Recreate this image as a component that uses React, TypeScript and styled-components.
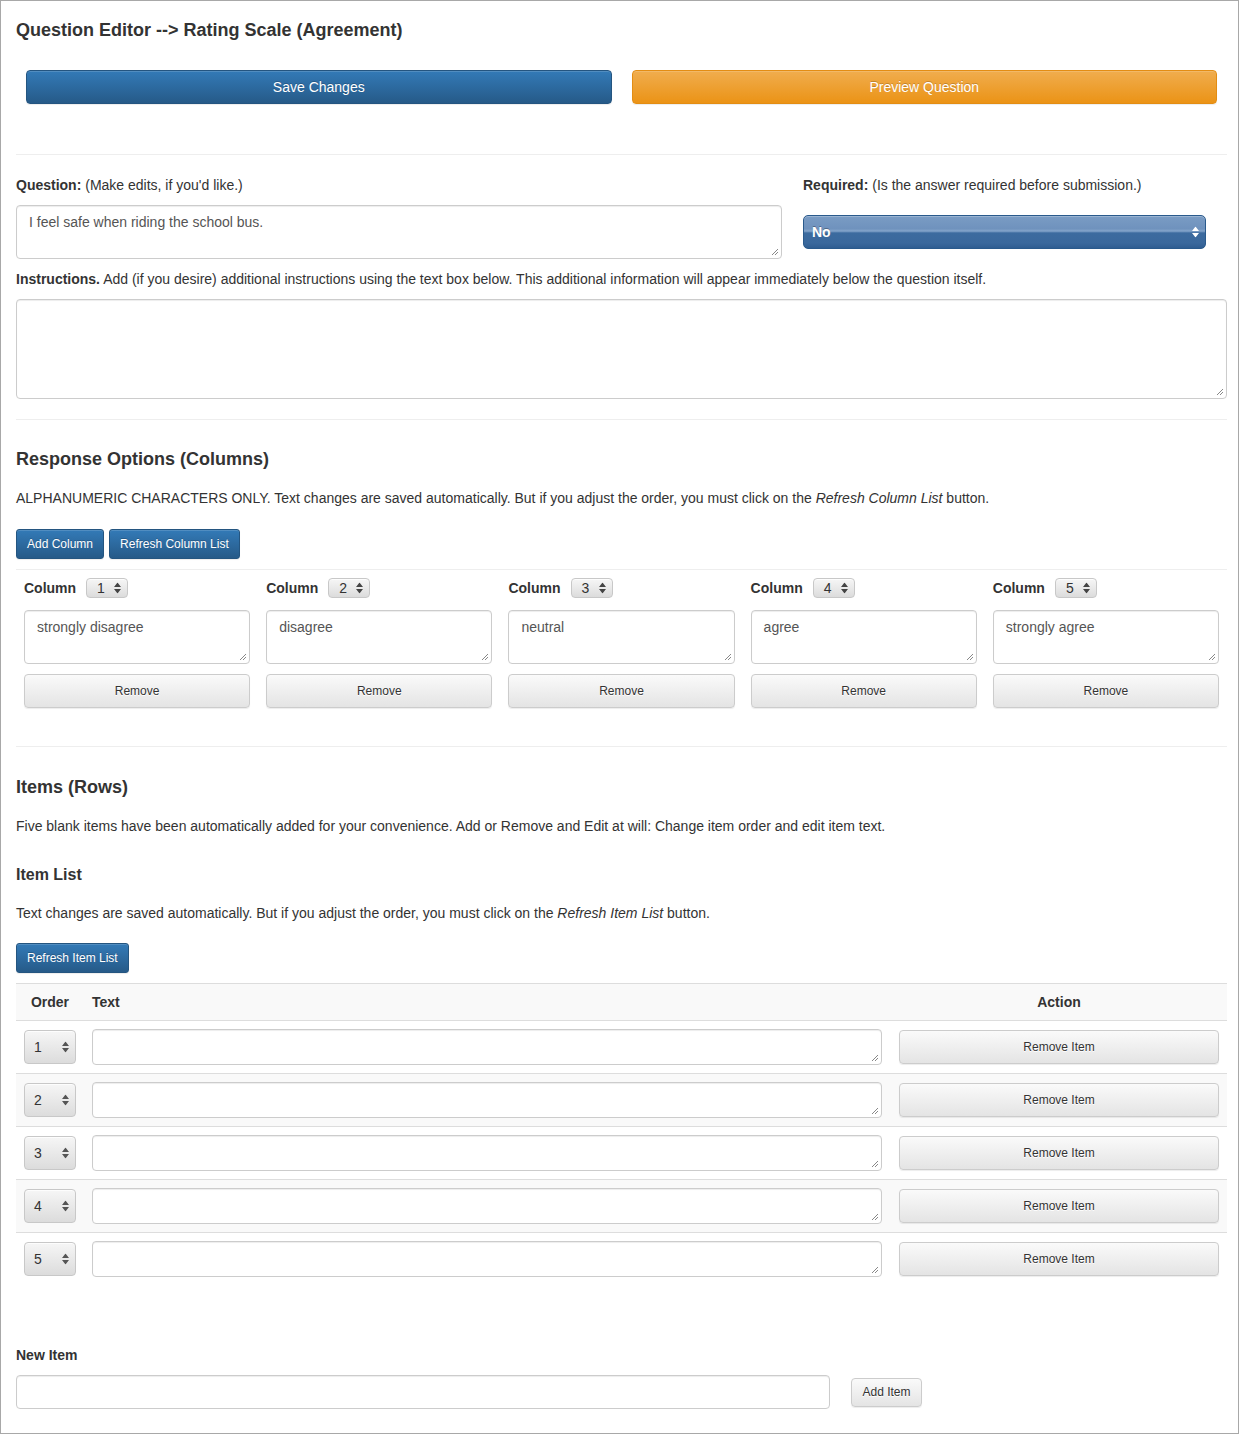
import React from "react";
import styled, { createGlobalStyle } from "styled-components";

const Global = createGlobalStyle`
  html, body { margin: 0; padding: 0; background: #fff; }
  body { font-family: "Liberation Sans", Arial, sans-serif; font-size: 14px; color: #333; line-height: 20px; }
  * { box-sizing: border-box; }
`;

const Page = styled.div`
  border: 1px solid #a8a8a8;
  padding: 19px 11px 24px 15px;
  min-height: 100vh;
`;

const Title = styled.h2<{ $size?: number; $mt?: number }>`
  margin: ${(p) => p.$mt ?? 0}px 0 0;
  font-size: ${(p) => p.$size ?? 18}px;
  line-height: 20px;
  font-weight: bold;
  color: #333;
`;

const Text = styled.p<{ $mt?: number }>`
  margin: ${(p) => p.$mt ?? 0}px 0 0;
  font-size: 14px;
  line-height: 20px;
`;

const Rule = styled.hr<{ $mt: number }>`
  border: 0;
  border-top: 1px solid #eee;
  margin: ${(p) => p.$mt}px 0 0;
  height: 0;
`;

const TopButtons = styled.div`
  display: grid;
  grid-template-columns: 1fr 1fr;
  margin-top: 30px;
`;

const TopCell = styled.div`
  padding: 0 10px;
`;

const BigButton = styled.button<{ $variant: "blue" | "orange" }>`
  width: 100%;
  height: 34px;
  border-radius: 4px;
  font-family: inherit;
  font-size: 14px;
  color: #fff;
  text-shadow: 0 -1px 0 rgba(0, 0, 0, 0.2);
  box-shadow: inset 0 1px 0 rgba(255, 255, 255, 0.15), 0 1px 1px rgba(0, 0, 0, 0.075);
  border: 1px solid ${(p) => (p.$variant === "blue" ? "#245580" : "#e38d13")};
  background: ${(p) =>
    p.$variant === "blue"
      ? "linear-gradient(to bottom, #337ab7 0%, #265a88 100%)"
      : "linear-gradient(to bottom, #f0ad4e 0%, #eb9316 100%)"};
`;

const QuestionRow = styled.div`
  display: grid;
  grid-template-columns: 766px 403px;
  column-gap: 21px;
  margin-top: 20px;
`;

const Label = styled.div<{ $mt?: number }>`
  margin-top: ${(p) => p.$mt ?? 0}px;
  font-size: 14px;
  line-height: 20px;
  b { font-weight: bold; }
`;

const Area = styled.div<{ $h: number; $mt?: number; $w?: string }>`
  position: relative;
  width: ${(p) => p.$w ?? "100%"};
  height: ${(p) => p.$h}px;
  margin-top: ${(p) => p.$mt ?? 0}px;
  border: 1px solid #ccc;
  border-radius: 4px;
  background: #fff;
  box-shadow: inset 0 1px 1px rgba(0, 0, 0, 0.075);
  padding: 6px 12px;
  color: #555;
  font-size: 14px;
  line-height: 20px;
`;

const Grip = styled.svg`
  position: absolute;
  right: 2px;
  bottom: 2px;
`;

const Resize = () => (
  <Grip width="8" height="8" viewBox="0 0 8 8">
    <path d="M7 1 L1 7 M7 4 L4 7" stroke="#888" strokeWidth="1" />
  </Grip>
);

const BlueSelect = styled.div`
  position: relative;
  margin-top: 20px;
  height: 34px;
  border: 1px solid #2a5a8c;
  border-radius: 5px;
  background: linear-gradient(
    to bottom,
    #7a9cc4 0%,
    #6f92bd 40%,
    #84a5cb 47%,
    #3c6b9f 53%,
    #3a689c 85%,
    #2f5d91 100%
  );
  box-shadow: inset 0 1px 0 rgba(255, 255, 255, 0.25);
  color: #fff;
  font-size: 14px;
  font-weight: bold;
  line-height: 32px;
  padding-left: 8px;
  text-shadow: 0 -1px 0 rgba(0, 0, 0, 0.3);
`;

const ArrowsSvg = styled.svg<{ $right: number }>`
  position: absolute;
  right: ${(p) => p.$right}px;
  top: 50%;
  transform: translateY(-50%);
`;

const Arrows = ({ color, right }: { color: string; right: number }) => (
  <ArrowsSvg $right={right} width="7" height="11" viewBox="0 0 7 11">
    <path d="M3.5 0 L7 4.5 L0 4.5 Z M0 6.5 L7 6.5 L3.5 11 Z" fill={color} />
  </ArrowsSvg>
);

const SmallButtons = styled.div<{ $mt: number }>`
  display: flex;
  gap: 5px;
  margin-top: ${(p) => p.$mt}px;
`;

const SmallBlue = styled.button`
  height: 30px;
  padding: 0 10px;
  border-radius: 3px;
  border: 1px solid #245580;
  background: linear-gradient(to bottom, #337ab7 0%, #265a88 100%);
  color: #fff;
  font-family: inherit;
  font-size: 12px;
  text-shadow: 0 -1px 0 rgba(0, 0, 0, 0.2);
  box-shadow: inset 0 1px 0 rgba(255, 255, 255, 0.15), 0 1px 1px rgba(0, 0, 0, 0.075);
`;

const ColumnsGrid = styled.div`
  display: grid;
  grid-template-columns: repeat(5, 1fr);
  margin-top: 8px;
`;

const ColumnCell = styled.div`
  padding: 0 8px;
`;

const ColumnHead = styled.div`
  display: flex;
  align-items: center;
  gap: 10px;
  height: 20px;
  font-weight: bold;
`;

const GraySelect = styled.div<{ $w: number; $h: number; $pl: number }>`
  position: relative;
  width: ${(p) => p.$w}px;
  height: ${(p) => p.$h}px;
  border: 1px solid #c8c8c8;
  border-radius: 4px;
  background: linear-gradient(to bottom, #f6f6f6 0%, #e9e9e9 50%, #dcdcdc 100%);
  box-shadow: inset 0 1px 0 rgba(255, 255, 255, 0.8);
  color: #333;
  font-weight: normal;
  font-size: 14px;
  line-height: ${(p) => p.$h - 2}px;
  padding-left: ${(p) => p.$pl}px;
`;

const GrayButton = styled.button<{ $h?: number; $mt?: number; $w?: string }>`
  width: ${(p) => p.$w ?? "100%"};
  height: ${(p) => p.$h ?? 34}px;
  margin-top: ${(p) => p.$mt ?? 0}px;
  border: 1px solid #ccc;
  border-radius: 4px;
  background: linear-gradient(to bottom, #fafafa 0%, #e4e4e4 100%);
  box-shadow: inset 0 1px 0 rgba(255, 255, 255, 0.15), 0 1px 1px rgba(0, 0, 0, 0.075);
  color: #333;
  font-family: inherit;
  font-size: 12px;
  text-shadow: 0 1px 0 #fff;
`;

const Table = styled.div`
  margin-top: 10px;
  border-top: 1px solid #ddd;
`;

const TRow = styled.div<{ $shade: boolean; $head?: boolean }>`
  display: grid;
  grid-template-columns: 68px 807px 1fr;
  align-items: center;
  background: ${(p) => (p.$shade ? "#f9f9f9" : "#fff")};
  border-top: ${(p) => (p.$head ? "none" : "1px solid #ddd")};
`;

const TCell = styled.div<{ $align?: string; $pad?: string }>`
  padding: ${(p) => p.$pad ?? "8px"};
  text-align: ${(p) => p.$align ?? "left"};
`;

const HeadCell = styled(TCell)`
  font-weight: bold;
  line-height: 20px;
`;

const NewItemRow = styled.div`
  display: flex;
  align-items: center;
  gap: 21px;
  margin-top: 10px;
`;

const Input = styled.div`
  width: 814px;
  height: 34px;
  border: 1px solid #ccc;
  border-radius: 4px;
  box-shadow: inset 0 1px 1px rgba(0, 0, 0, 0.075);
`;

const Em = styled.i`
  font-style: italic;
`;

const columns = ["strongly disagree", "disagree", "neutral", "agree", "strongly agree"];

export default function App() {
  return (
    <>
      <Global />
      <Page>
        <Title>Question Editor --&gt; Rating Scale (Agreement)</Title>
        <TopButtons>
          <TopCell>
            <BigButton $variant="blue">Save Changes</BigButton>
          </TopCell>
          <TopCell>
            <BigButton $variant="orange">Preview Question</BigButton>
          </TopCell>
        </TopButtons>
        <Rule $mt={50} />
        <QuestionRow>
          <div>
            <Label>
              <b>Question:</b> (Make edits, if you'd like.)
            </Label>
            <Area $h={54} $mt={10}>
              I feel safe when riding the school bus.
              <Resize />
            </Area>
          </div>
          <div>
            <Label>
              <b>Required:</b> (Is the answer required before submission.)
            </Label>
            <BlueSelect>
              No
              <Arrows color="#fff" right={6} />
            </BlueSelect>
          </div>
        </QuestionRow>
        <Label $mt={10}>
          <b>Instructions.</b> Add (if you desire) additional instructions using the text box below. This additional
          information will appear immediately below the question itself.
        </Label>
        <Area $h={100} $mt={10}>
          <Resize />
        </Area>
        <Rule $mt={20} />
        <Title $mt={29}>Response Options (Columns)</Title>
        <Text $mt={19}>
          ALPHANUMERIC CHARACTERS ONLY. Text changes are saved automatically. But if you adjust the order, you must
          click on the <Em>Refresh Column List</Em> button.
        </Text>
        <SmallButtons $mt={21}>
          <SmallBlue>Add Column</SmallBlue>
          <SmallBlue>Refresh Column List</SmallBlue>
        </SmallButtons>
        <Rule $mt={10} />
        <ColumnsGrid>
          {columns.map((c, i) => (
            <ColumnCell key={c}>
              <ColumnHead>
                Column
                <GraySelect $w={42} $h={20} $pl={10}>
                  {i + 1}
                  <Arrows color="#444" right={6} />
                </GraySelect>
              </ColumnHead>
              <Area $h={54} $mt={12}>
                {c}
                <Resize />
              </Area>
              <GrayButton $mt={10}>Remove</GrayButton>
            </ColumnCell>
          ))}
        </ColumnsGrid>
        <Rule $mt={38} />
        <Title $mt={30}>Items (Rows)</Title>
        <Text $mt={19}>
          Five blank items have been automatically added for your convenience. Add or Remove and Edit at will: Change
          item order and edit item text.
        </Text>
        <Title $size={16} $mt={29}>
          Item List
        </Title>
        <Text $mt={18}>
          Text changes are saved automatically. But if you adjust the order, you must click on the{" "}
          <Em>Refresh Item List</Em> button.
        </Text>
        <SmallButtons $mt={20}>
          <SmallBlue>Refresh Item List</SmallBlue>
        </SmallButtons>
        <Table>
          <TRow $shade $head>
            <HeadCell $align="center">Order</HeadCell>
            <HeadCell>Text</HeadCell>
            <HeadCell $align="center">Action</HeadCell>
          </TRow>
          {[1, 2, 3, 4, 5].map((n) => (
            <TRow key={n} $shade={n % 2 === 0}>
              <TCell $pad="8px 8px">
                <GraySelect $w={52} $h={34} $pl={9}>
                  {n}
                  <Arrows color="#555" right={6} />
                </GraySelect>
              </TCell>
              <TCell $pad="8px 9px 8px 8px">
                <Area $h={36}>
                  <Resize />
                </Area>
              </TCell>
              <TCell $pad="8px 8px 8px 8px">
                <GrayButton>Remove Item</GrayButton>
              </TCell>
            </TRow>
          ))}
        </Table>
        <Label $mt={60}>
          <b>New Item</b>
        </Label>
        <NewItemRow>
          <Input />
          <GrayButton $w="71px" $h={29}>
            Add Item
          </GrayButton>
        </NewItemRow>
      </Page>
    </>
  );
}
